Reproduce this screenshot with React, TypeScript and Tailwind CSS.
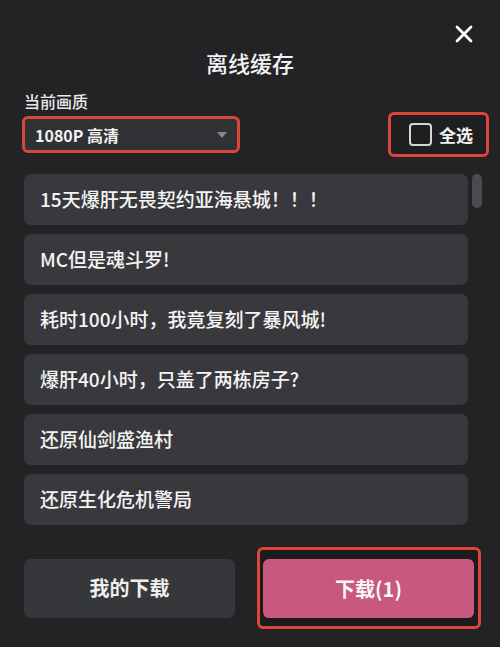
import { X } from 'lucide-react';

const videos = [
  '15天爆肝无畏契约亚海悬城！！！',
  'MC但是魂斗罗!',
  '耗时100小时，我竟复刻了暴风城!',
  '爆肝40小时，只盖了两栋房子?',
  '还原仙剑盛渔村',
  '还原生化危机警局',
];

export default function App() {
  return (
    <div
      className="relative w-[500px] h-[647px] bg-[#232326] text-white overflow-hidden"
      style={{ fontFamily: '"Noto Sans CJK SC", "Noto Sans", sans-serif' }}
    >
      {/* Close */}
      <button className="absolute top-[20px] right-[22px] w-[28px] h-[28px] flex items-center justify-center text-white">
        <X className="w-[30px] h-[30px]" strokeWidth={2.4} />
      </button>

      {/* Header */}
      <div className="pt-[46px]">
        <h1 className="text-center text-[22px] leading-[32px] font-medium text-[#f2f2f2]">离线缓存</h1>
      </div>

      <div className="px-[22px]">
        <p className="mt-[12px] pl-[2px] text-[16px] leading-[22px] font-medium text-[#e8e8e8]">当前画质</p>

        {/* Quality + select all */}
        <div className="flex items-center justify-between h-[45px]">
          <div className="w-[218px] h-[37px] border-[3px] border-[#d9473c] rounded-[6px] bg-[#303134] flex items-center justify-between pl-[10px] pr-[10px]">
            <span className="text-[16px] font-semibold text-[#f2f2f2]">1080P 高清</span>
            <span className="w-0 h-0 border-l-[5px] border-r-[5px] border-t-[6px] border-l-transparent border-r-transparent border-t-[#8a8a8d]" />
          </div>
          <div className="w-[101px] h-[45px] mr-[-11px] border-[3px] border-[#d9473c] rounded-[6px] bg-[#1f1f21] flex items-center pl-[18px]">
            <span className="w-[23px] h-[23px] border-2 border-[#d6d6d6] rounded-[4px]" />
            <span className="ml-[7px] text-[17px] font-semibold text-[#f2f2f2]">全选</span>
          </div>
        </div>
      </div>

      {/* List */}
      <div className="mt-[17px] pl-[24px] pr-[18px] flex h-[354px] overflow-hidden">
        <div className="flex-1 flex flex-col gap-[9px]">
          {videos.map((title) => (
            <div
              key={title}
              className="h-[51px] shrink-0 rounded-[7px] bg-[#39393d] flex items-center pl-[16px] text-[19px] font-medium text-[#f4f4f4]"
            >
              {title}
            </div>
          ))}
        </div>
        <div className="w-[10px] ml-[4px]">
          <div className="h-[34px] rounded-full bg-[#4a4b4f]" />
        </div>
      </div>

      {/* Bottom buttons */}
      <div className="mt-[19px] pl-[24px] flex items-center">
        <button className="w-[211px] h-[59px] rounded-[7px] bg-[#36373a] text-[20px] font-semibold text-[#eeeeee]">
          我的下载
        </button>
        <div className="ml-[22px] w-[224px] h-[82px] border-[3px] border-[#d9473c] rounded-[6px] bg-[#1c1c1e] pl-[3px] pr-[4px] pt-[9px] pb-[8px]">
          <button className="w-full h-full rounded-[6px] bg-[#c8587f] text-[20px] font-semibold text-[#f6f6f6]">
            下载(1)
          </button>
        </div>
      </div>
    </div>
  );
}
